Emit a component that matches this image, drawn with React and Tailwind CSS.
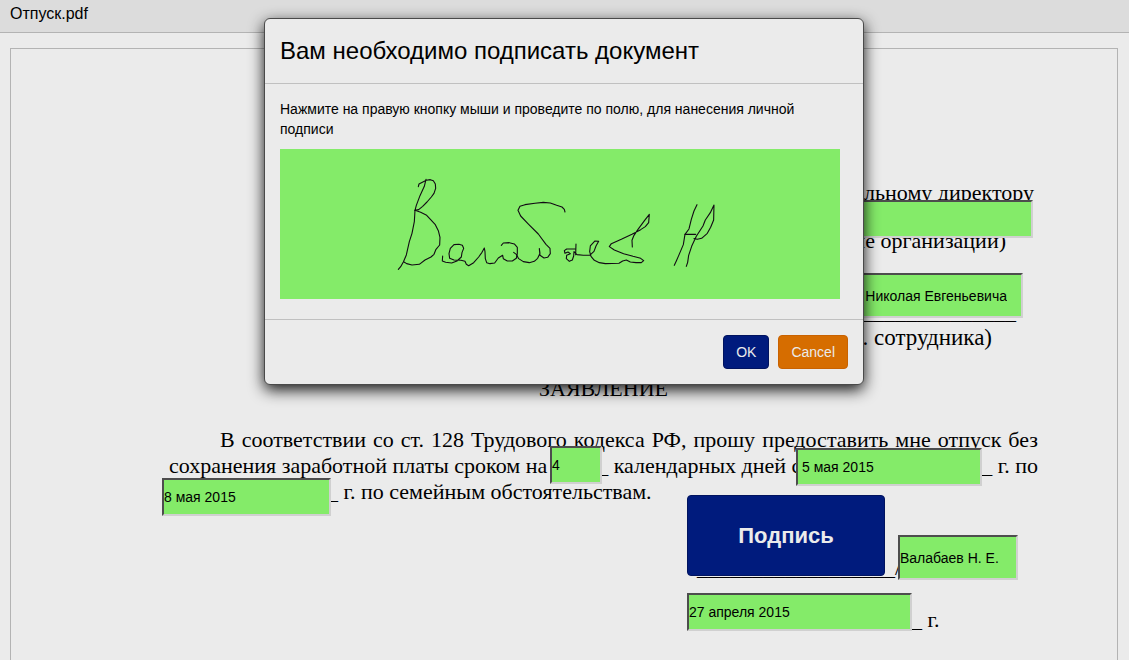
const fieldStyle =
  "absolute border-2 border-t-[#4d4d4d] border-l-[#4d4d4d] border-r-[#d0d0d0] border-b-[#d0d0d0] bg-[#84eb69] p-0 text-sm text-black outline-none";

function Field({ label, value, className }) {
  return (
    <input
      type="text"
      aria-label={label}
      defaultValue={value}
      className={`${fieldStyle} ${className}`}
    />
  );
}

function Signature() {
  return (
    <svg
      role="img"
      aria-label="Личная подпись"
      viewBox="0 0 560 150"
      className="block h-[150px] w-[560px] max-w-full bg-[#84eb69]"
      fill="none"
      stroke="#120a14"
      strokeWidth="3.3"
      strokeLinecap="round"
      strokeLinejoin="round"
    >
      <g transform="translate(100 11) scale(0.3333)">
        <path d="M115 80 L117 72 L130 65 L139 61 L151 59 L160 62 L166 72 L167 85 L162 100 L154 111 L141 126 L128 139 L116 149 L105 151 L109 136 L120 107 L133 79 L138 58" />
        <path d="M105 151 L103 185 L96 220 L88 245 L79 285 L70 306 L62 320 L55 328" />
        <path d="M105 151 L122 157 L140 166 L152 179 L166 194 L175 212 L180 232 L179 255 L168 268 L162 283 L153 291 L135 300 L118 313 L96 315 L80 311 L72 306" />
        <path d="M188 288 L187 303 L197 307 L215 309 L231 303 L244 291 L246 278 L251 265 L247 256 L237 253 L222 254 L211 265 L207 281 L209 295 L222 300 L243 301 L255 304 L259 313 L266 317 L281 308 L296 291 L306 277 L313 264 L315 275 L316 296 L320 308 L330 311 L344 309 L355 294 L368 286 L370 296 L382 303 L397 303 L409 295 L412 280 L412 262 L403 252 L388 248 L370 249 L364 256" />
        <path d="M401 277 L409 283 L416 296 L430 305 L448 308 L463 304 L473 295 L480 280 L478 266 L480 286 L492 294 L503 292 L511 281 L510 265 L498 253 L475 222 L446 193 L422 168 L414 151 L420 139 L435 134 L465 130 L490 127 L511 129 L530 136 L546 141 L553 148 L555 156" />
      </g>
      <g transform="translate(260 11) scale(0.3333)">
        <path d="M108 252 L107 284 M105 267 L80 267 L73 272 L75 280 L84 276 L91 281 L80 286 L79 296 L88 304 L97 300 L101 288 L102 275 L111 284 L130 286 L149 286 L162 274 L168 258 L176 244 L165 243 L151 258 L149 275 L153 289 L163 301 L178 308 L196 311 L237 310 L248 303 L259 300 L271 306 L288 308 L304 308 L311 302 L302 295 L279 289 L251 281 L223 270 L208 260 L214 251 L244 238 L276 223 L302 209 L316 200 L326 188 L328 163 L314 181 L294 208 L282 226 L276 241 L277 261" />
        <path d="M471 134 L462 153 L454 178 L447 207 L435 223 L430 254 L416 287 L409 303 L403 316" />
        <path d="M435 223 L467 223" />
        <path d="M462 236 L472 238 L485 235 L502 220 L512 202 L521 180 L522 135 L511 158 L496 180 L489 198 L469 229 L455 259 L446 286 L443 307 L439 319" />
      </g>
    </svg>
  );
}

function SignDialog() {
  return (
    <div className="absolute inset-x-0 top-0 flex justify-center pt-[18px] pr-px">
      <section
        role="dialog"
        aria-modal="true"
        aria-labelledby="dialog-title"
        className="w-[600px] max-w-full rounded-md border border-[#4a4a4a] bg-[#ebebeb] shadow-[0_5px_15px_rgba(0,0,0,0.9)]"
      >
        <header className="border-b border-[#c0c0c0] p-[15px]">
          <h2 id="dialog-title" className="text-2xl leading-[34px]">
            Вам необходимо подписать документ
          </h2>
        </header>
        <div className="px-[15px] pt-[15px] pb-5">
          <p className="mb-[10px] text-sm leading-5">
            Нажмите на правую кнопку мыши и проведите по полю, для нанесения личной подписи
          </p>
          <Signature />
        </div>
        <footer className="flex justify-end gap-[9px] border-t border-[#c0c0c0] p-[15px]">
          <button
            type="button"
            className="rounded border border-[#00135f] bg-[#001b7d] px-3 py-[6px] text-sm leading-5 text-[#ebebeb]"
          >
            OK
          </button>
          <button
            type="button"
            className="rounded border border-[#c96200] bg-[#d66d00] px-3 py-[6px] text-sm leading-5 text-[#ebebeb]"
          >
            Cancel
          </button>
        </footer>
      </section>
    </div>
  );
}

function Sheet() {
  return (
    <article className="relative ml-[158px] w-[869px] pt-[131px] font-['Liberation_Serif',serif] text-[22px] leading-[26px]">
      <div className="flex flex-col items-end text-right">
        <p className="pr-1">Генеральному директору</p>
        <p className="mt-[22px] pr-8">(наименование организации)</p>
        <p className="mt-[45px] pr-[22px]">______________________</p>
        <p className="pr-[46px] text-[23px]">. сотрудника)</p>
      </div>
      <h1 className="mt-[25px] text-center">ЗАЯВЛЕНИЕ</h1>
      <div className="mt-[25px]">
        <p className="pl-[51px] [text-align-last:justify]">
          В соответствии со ст. 128 Трудового кодекса РФ, прошу предоставить мне отпуск без
        </p>
        <p className="flex whitespace-nowrap">
          <span>сохранения заработной платы сроком на</span>
          <span className="ml-[50px]">_ календарных дней с</span>
          <span className="ml-auto">_ г. по</span>
        </p>
        <p className="pl-[158px]">_ г. по семейным обстоятельствам.</p>
      </div>
      <p className="mt-[50px] pl-[528px]">__________________/</p>
      <p className="mt-[26px] pl-[742px]">_ г.</p>

      <div className="font-['Liberation_Sans',Arial,sans-serif]">
        <Field label="Организация" value="" className="top-[151px] left-[560px] h-[38px] w-[304px]" />
        <Field
          label="Сотрудник"
          value="Валабаева Николая Евгеньевича"
          className="top-[224px] left-[616px] h-[45px] w-[238px] pr-[14px] text-right"
        />
        <Field label="Количество дней" value="4" className="top-[397px] left-[381px] h-[38px] w-[52px]" />
        <Field label="Дата начала" value="5 мая 2015" className="top-[399px] left-[627px] h-[38px] w-[186px] pl-1" />
        <Field label="Дата окончания" value="8 мая 2015" className="top-[429px] left-[-7px] h-[38px] w-[169px]" />
        <button
          type="button"
          className="absolute top-[446px] left-[518px] h-[81px] w-[198px] rounded border border-[#00135f] bg-[#001b7d] text-[22px] font-bold text-[#ebebeb]"
        >
          Подпись
        </button>
        <Field label="Фамилия и инициалы" value="Валабаев Н. Е." className="top-[486px] left-[729px] h-[45px] w-[120px]" />
        <Field label="Дата подписания" value="27 апреля 2015" className="top-[544px] left-[518px] h-[38px] w-[225px]" />
      </div>
    </article>
  );
}

export default function App() {
  return (
    <div className="relative flex h-screen flex-col overflow-hidden bg-[#ebebeb] font-['Liberation_Sans',Arial,sans-serif] text-black">
      <header className="shrink-0 border-b border-[#b3b3b3] bg-[#dcdcdc] px-[10px] pt-[2px] pb-[6px] text-base">
        Отпуск.pdf
      </header>
      <main className="min-h-0 flex-1 overflow-hidden px-[10px] pt-[15px]">
        <div className="mr-px min-h-[1400px] border border-[#b3b3b3]">
          <Sheet />
        </div>
      </main>
      <SignDialog />
    </div>
  );
}
